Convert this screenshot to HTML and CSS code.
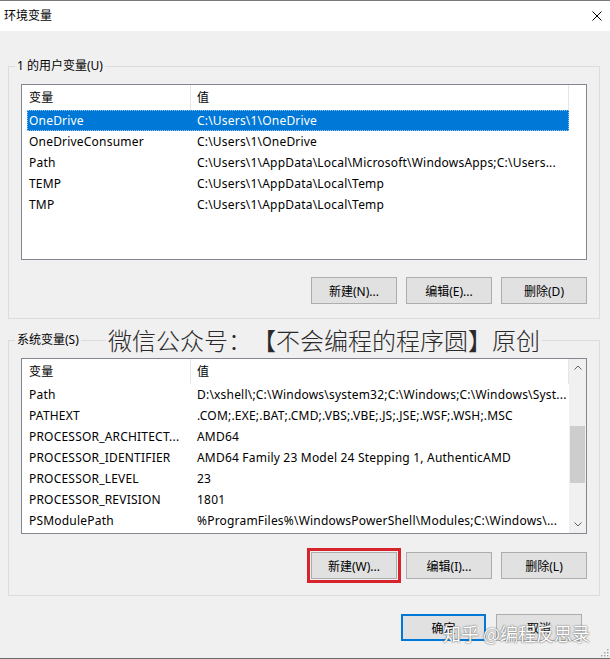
FILE: index.html
```html
<!DOCTYPE html>
<html lang="zh-CN">
<head>
<meta charset="utf-8">
<title>环境变量</title>
<link rel="stylesheet" href="styles.css">
</head>
<body>
<div class="window">
  <div class="titlebar">
    <span class="title">环境变量</span>
    <svg class="close" width="10" height="10" viewBox="0 0 10 10"><path d="M0.5 0.5 L9.5 9.5 M9.5 0.5 L0.5 9.5" stroke="#000" stroke-width="1" fill="none"/></svg>
  </div>
  <div class="content">
    <fieldset class="group">
      <legend class="legend">1 的用户变量(U)</legend>
      <div class="group-body">
        <div class="list">
          <div class="list-main">
            <div class="row head"><span class="c1">变量</span><span class="c2">值</span></div>
            <div class="row sel"><span class="c1">OneDrive</span><span class="c2">C:\Users\1\OneDrive</span></div>
            <div class="row"><span class="c1">OneDriveConsumer</span><span class="c2">C:\Users\1\OneDrive</span></div>
            <div class="row"><span class="c1">Path</span><span class="c2">C:\Users\1\AppData\Local\Microsoft\WindowsApps;C:\Users...</span></div>
            <div class="row"><span class="c1">TEMP</span><span class="c2">C:\Users\1\AppData\Local\Temp</span></div>
            <div class="row"><span class="c1">TMP</span><span class="c2">C:\Users\1\AppData\Local\Temp</span></div>
          </div>
        </div>
        <div class="btns btns-user">
          <button class="btn">新建(N)...</button>
          <button class="btn">编辑(E)...</button>
          <button class="btn">删除(D)</button>
        </div>
      </div>
    </fieldset>
    <fieldset class="group group-sys">
      <legend class="legend">系统变量(S)</legend>
      <div class="group-body">
        <div class="list">
          <div class="list-main">
            <div class="row head"><span class="c1">变量</span><span class="c2">值</span></div>
            <div class="row"><span class="c1">Path</span><span class="c2">D:\xshell\;C:\Windows\system32;C:\Windows;C:\Windows\Syst...</span></div>
            <div class="row"><span class="c1">PATHEXT</span><span class="c2">.COM;.EXE;.BAT;.CMD;.VBS;.VBE;.JS;.JSE;.WSF;.WSH;.MSC</span></div>
            <div class="row"><span class="c1">PROCESSOR_ARCHITECT...</span><span class="c2">AMD64</span></div>
            <div class="row"><span class="c1">PROCESSOR_IDENTIFIER</span><span class="c2">AMD64 Family 23 Model 24 Stepping 1, AuthenticAMD</span></div>
            <div class="row"><span class="c1">PROCESSOR_LEVEL</span><span class="c2">23</span></div>
            <div class="row"><span class="c1">PROCESSOR_REVISION</span><span class="c2">1801</span></div>
            <div class="row"><span class="c1">PSModulePath</span><span class="c2">%ProgramFiles%\WindowsPowerShell\Modules;C:\Windows\...</span></div>
          </div>
          <div class="scrollbar">
            <div class="sb-btn"><svg width="8" height="5" viewBox="0 0 8 5"><path d="M0.5 4.5 L4 1 L7.5 4.5" stroke="#606060" stroke-width="1" fill="none"/></svg></div>
            <div class="sb-track"><div class="sb-thumb"></div></div>
            <div class="sb-btn"><svg width="8" height="5" viewBox="0 0 8 5"><path d="M0.5 0.5 L4 4 L7.5 0.5" stroke="#606060" stroke-width="1" fill="none"/></svg></div>
          </div>
        </div>
        <div class="btns btns-sys">
          <button class="btn btn-marked">新建(W)...</button>
          <button class="btn">编辑(I)...</button>
          <button class="btn">删除(L)</button>
        </div>
      </div>
    </fieldset>
  </div>
  <div class="footer">
    <button class="btn btn-default">确定</button>
    <button class="btn btn-cancel">取消</button>
  </div>
  <div class="wm-top">微信公众号：【不会编程的程序圆】原创</div>
  <div class="wm-bottom">知乎 @编程反思录</div>
  <svg class="grip" width="9" height="9" viewBox="0 0 9 9">
    <rect x="7" y="1" width="1.4" height="1.4" fill="#a0a0a0"/>
    <rect x="4" y="4" width="1.4" height="1.4" fill="#a0a0a0"/>
    <rect x="7" y="4" width="1.4" height="1.4" fill="#a0a0a0"/>
    <rect x="1" y="7" width="1.4" height="1.4" fill="#a0a0a0"/>
    <rect x="4" y="7" width="1.4" height="1.4" fill="#a0a0a0"/>
    <rect x="7" y="7" width="1.4" height="1.4" fill="#a0a0a0"/>
  </svg>
</div>
</body>
</html>
```

FILE: styles.css
```css
* { box-sizing: border-box; }
html, body { margin: 0; padding: 0; }
body {
  background: #f0f0f0;
  font-family: "Noto Sans", "Noto Sans CJK SC", sans-serif;
  font-size: 12px;
  line-height: 16px;
  color: #000;
}
.window {
  position: relative;
  width: 610px;
  height: 659px;
  display: flex;
  flex-direction: column;
  background: #f0f0f0;
  border-top: 1px solid #7a7a7a;
  border-bottom: 1px solid #6a6a6a;
}
.titlebar {
  height: 30px;
  flex: none;
  background: #fff;
  display: flex;
  align-items: center;
  justify-content: space-between;
  padding: 0 8px 0 4px;
}
.title { font-size: 12px; }
.close { display: block; }
.content {
  padding: 27px 10px 0 8px;
}
.group {
  margin: 0;
  padding: 0;
  border: 1px solid #dcdcdc;
  min-width: 0;
}
.group-sys { margin-top: 13px; }
.legend {
  margin-left: 6px;
  padding: 0 2px;
  line-height: 16px;
}
.group-body {
  padding: 10px 12px 14px;
}
.group-sys .group-body { padding-bottom: 16px; }
.list {
  height: 176px;
  border: 1px solid #828790;
  background: #fff;
  display: flex;
}
.list-main {
  margin-left: 5px;
  width: 542px;
  flex: none;
}
.row {
  display: flex;
  height: 21px;
  line-height: 21px;
  white-space: nowrap;
  letter-spacing: 0.2px;
}
.row.head {
  height: 25px;
  line-height: 25px;
}
.c1 {
  width: 164px;
  flex: none;
  padding-left: 2px;
  overflow: hidden;
}
.c2 {
  flex: 1;
  min-width: 0;
  padding-left: 6px;
  overflow: hidden;
}
.head .c1, .head .c2 { border-right: 1px solid #e5e5e5; }
.row.sel {
  background: #0078d7;
  color: #fff;
  outline: 1px dotted #9cc8ee;
  outline-offset: -1px;
}
.scrollbar {
  width: 17px;
  flex: none;
  display: flex;
  flex-direction: column;
  background: #f0f0f0;
}
.sb-btn {
  height: 17px;
  display: flex;
  align-items: center;
  justify-content: center;
}
.sb-btn svg { display: block; }
.sb-track { flex: 1; }
.sb-thumb {
  margin: 50px 1px 0;
  height: 57px;
  background: #cdcdcd;
}
.btns {
  display: flex;
  justify-content: flex-end;
  gap: 9px;
  margin-top: 17px;
}
.btns-sys { margin-top: 18px; }
.btn {
  width: 86px;
  height: 27px;
  padding: 0;
  margin: 0;
  background: #e1e1e1;
  border: 1px solid #adadad;
  font-family: "Noto Sans", "Noto Sans CJK SC", sans-serif;
  font-size: 12px;
  color: #000;
  display: flex;
  align-items: center;
  justify-content: center;
}
.btn-marked {
  outline: 3px solid #d7242c;
  outline-offset: 1px;
}
.footer {
  display: flex;
  justify-content: flex-end;
  gap: 10px;
  padding: 18px 28px 0 0;
}
.btn-default {
  width: 85px;
  border: 2px solid #0078d7;
}
.wm-top {
  position: absolute;
  left: 106px;
  top: 325px;
  padding: 0 2px;
  background: #f0f0f0;
  font-family: "Noto Sans CJK SC", sans-serif;
  font-size: 24px;
  line-height: 28px;
  font-weight: 300;
  color: #2a2a2a;
  text-spacing-trim: space-all;
  font-feature-settings: "palt" 0, "halt" 0;
}
.wm-bottom {
  position: absolute;
  left: 443px;
  top: 621px;
  font-family: "Noto Sans CJK SC", sans-serif;
  font-size: 18px;
  line-height: 22px;
  color: #fff;
  text-shadow: 0 0 1px #666, 0 0 2px #777;
}
.grip {
  position: absolute;
  right: 1px;
  bottom: 1px;
}
```
